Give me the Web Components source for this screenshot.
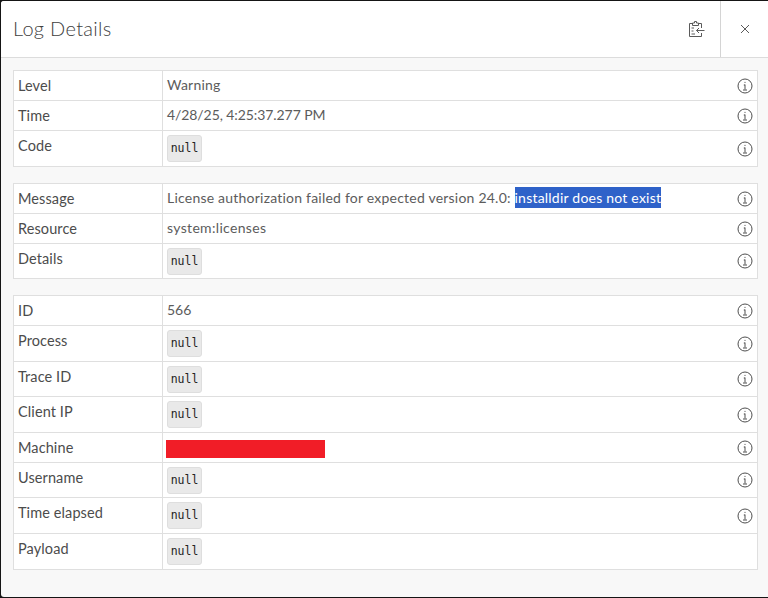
<!DOCTYPE html>
<html>
<head>
<meta charset="utf-8">
<title>Log Details</title>
<style>
  html, body { margin: 0; padding: 0; height: 100%; background: #151515; }
  body { font-family: "Lato", "Noto Sans", sans-serif; color: #4a4a4a; overflow: hidden; }
</style>
</head>
<body>
<log-dialog heading="Log Details">
  <log-table>
    <log-row label="Level">Warning</log-row>
    <log-row label="Time" style="--ls:-.08px">4/28/25, 4:25:37.277 PM</log-row>
    <log-row label="Code" tall><null-chip></null-chip></log-row>
  </log-table>
  <log-table>
    <log-row label="Message">License authorization failed for expected version 24.0: <sel-text>installdir does not exist</sel-text></log-row>
    <log-row label="Resource" style="--ls:.33px">system:licenses</log-row>
    <log-row label="Details" tall style="height:35px"><null-chip></null-chip></log-row>
  </log-table>
  <log-table>
    <log-row label="ID" style="--ls:0">566</log-row>
    <log-row label="Process" tall><null-chip></null-chip></log-row>
    <log-row label="Trace ID" tall style="height:35px"><null-chip></null-chip></log-row>
    <log-row label="Client IP" tall><null-chip></null-chip></log-row>
    <log-row label="Machine"><red-out></red-out></log-row>
    <log-row label="Username" tall style="height:35px"><null-chip></null-chip></log-row>
    <log-row label="Time elapsed" tall><null-chip></null-chip></log-row>
    <log-row label="Payload" tall no-info><null-chip></null-chip></log-row>
  </log-table>
</log-dialog>

<script>
class LogDialog extends HTMLElement {
  constructor() {
    super();
    this._shadowRoot = this.attachShadow({ mode: 'open' });
    this._shadowRoot.innerHTML = `
    <style>
      :host {
        display: flex;
        flex-direction: column;
        box-sizing: border-box;
        height: 596px;
        margin: 1px 0 0 1px;
        background: #f8f8f8;
        border-radius: 3px 0 0 3px;
        overflow: hidden;
      }
      header {
        display: flex;
        align-items: stretch;
        height: 56px;
        background: #fff;
        border-bottom: 1px solid #dcdcdc;
        flex: none;
      }
      h1 {
        flex: 1;
        margin: 0;
        padding-left: 12px;
        font-size: 20px;
        font-weight: 300;
        line-height: 55px;
        color: #404040;
        letter-spacing: .3px;
      }
      .btn {
        display: flex;
        align-items: center;
        justify-content: center;
      }
      .copy { width: 48px; }
      .close { width: 47px; border-left: 1px solid #d4d4d4; }
      main {
        padding: 12px 10px 0 12px;
      }
      ::slotted(log-table) { margin-bottom: 16px; }
      slot { display: block; }
    </style>
    <header>
      <h1></h1>
      <div class="btn copy">
        <svg width="18" height="18" viewBox="0 0 18 18" fill="none" stroke="#5a5a5a" stroke-width="1">
          <path d="M11.500 3.500H14.500V8M14.500 13V16.500H2.500V3.500H5.500"/>
          <path d="M5.500 5.500V3H7.500V1.500H9.500V3H11.500V5.500Z"/>
          <path d="M4.500 8H7M4.500 11H6.500M4.500 14H8"/>
          <path d="M17.500 10.500H9.500M12 8L9.500 10.500L12 13"/>
        </svg>
      </div>
      <div class="btn close">
        <svg width="16" height="16" viewBox="0 0 16 16" fill="none" stroke="#5a5a5a" stroke-width="1">
          <path d="M4 4L12 12M12 4L4 12"/>
        </svg>
      </div>
    </header>
    <main><slot></slot></main>
    `;
    this._shadowRoot.querySelector('h1').textContent = this.getAttribute('heading');
  }
}

class LogTable extends HTMLElement {
  constructor() {
    super();
    this._shadowRoot = this.attachShadow({ mode: 'open' });
    this._shadowRoot.innerHTML = `
    <style>
      :host {
        display: block;
        background: #fff;
        border: 1px solid #dfdfdf;
        border-bottom: 0;
        font-size: 14px;
      }
    </style>
    <slot></slot>
    `;
  }
}

class LogRow extends HTMLElement {
  constructor() {
    super();
    this._shadowRoot = this.attachShadow({ mode: 'open' });
    this._shadowRoot.innerHTML = `
    <style>
      :host {
        display: grid;
        grid-template-columns: 149px 1fr 28px;
        height: 30px;
        box-sizing: border-box;
        border-bottom: 1px solid #dfdfdf;
        color: #4c4c4c;
      }
      :host([tall]) { height: 36px; }
      .label {
        padding: 5px 0 0 4px;
        border-right: 1px solid #dfdfdf;
        line-height: 20px;
        font-size: 14.500px;
        letter-spacing: .1px;
      }
      .value {
        display: flex;
        align-items: center;
        padding-left: 4px;
        font-size: 14px;
        letter-spacing: var(--ls, .22px);
        color: #5c5c5c;
        white-space: nowrap;
        padding-bottom: 3px;
      }
      .info {
        display: flex;
        align-items: center;
        justify-content: center;
        padding: 0 0 0 3px;
      }
      :host([no-info]) .info { visibility: hidden; }
    </style>
    <div class="label"></div>
    <div class="value"><span><slot></slot></span></div>
    <div class="info">
      <svg width="16" height="16" viewBox="0 0 16 16" fill="none" stroke="#4f4f4f" stroke-width="1">
        <circle cx="8" cy="8" r="7"/>
        <path d="M8 6.500V11.500M6 12H10M6.800 7H8"/>
        <circle cx="8" cy="4.300" r=".6" fill="#4f4f4f" stroke="none"/>
      </svg>
    </div>
    `;
    this._shadowRoot.querySelector('.label').textContent = this.getAttribute('label');
  }
}

class NullChip extends HTMLElement {
  constructor() {
    super();
    this._shadowRoot = this.attachShadow({ mode: 'open' });
    this._shadowRoot.innerHTML = `
    <style>
      :host {
        display: block;
        box-sizing: border-box;
        width: 35px;
        height: 27px;
        margin-top: 3px;
        background: #e9e9e9;
        border: 1px solid #dedede;
        border-radius: 3px;
        font: 11.500px/25px "DejaVu Sans Mono", monospace;
        letter-spacing: 0;
        color: #222;
        text-align: center;
      }
    </style>
    <span>null</span>
    `;
  }
}

// selected part of the message text
class SelText extends HTMLElement {
  constructor() {
    super();
    this._shadowRoot = this.attachShadow({ mode: 'open' });
    this._shadowRoot.innerHTML = `
    <style>
      :host {
        display: inline-block;
        background: #2f62c9;
        color: #fff;
        line-height: 21px;
      }
    </style>
    <slot></slot>
    `;
  }
}

class RedOut extends HTMLElement {
  constructor() {
    super();
    this.attachShadow({ mode: 'open' }).innerHTML = `
    <style>
      :host {
        display: block;
        width: 159px;
        height: 18px;
        margin: 6px 0 0 -1px;
        background: #f11d27;
      }
    </style>
    `;
  }
}

customElements.define('log-dialog', LogDialog);
customElements.define('log-table', LogTable);
customElements.define('log-row', LogRow);
customElements.define('null-chip', NullChip);
customElements.define('sel-text', SelText);
customElements.define('red-out', RedOut);
</script>
</body>
</html>
